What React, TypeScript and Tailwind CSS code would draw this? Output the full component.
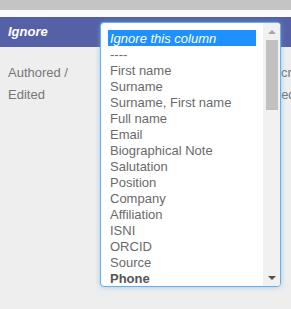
import React from "react";

const options = [
  "----",
  "First name",
  "Surname",
  "Surname, First name",
  "Full name",
  "Email",
  "Biographical Note",
  "Salutation",
  "Position",
  "Company",
  "Affiliation",
  "ISNI",
  "ORCID",
  "Source",
];

export default function App() {
  return (
    <div className="relative w-[291px] h-[309px] overflow-hidden bg-[#eeeeee] font-['Liberation_Sans',Arial,sans-serif] text-[13px]">
      <div className="h-[10px] bg-[#c4c4c4]" />
      <div className="h-[7px] bg-[#fafafa]" />
      <div className="flex h-[30px] items-center bg-[#5660a6] px-2 font-bold italic text-white">
        Ignore
      </div>
      <div className="flex pt-[15px] leading-[22px] text-[#777]">
        <div className="w-[258px] shrink-0 pl-2">
          Authored /<br />
          Edited
        </div>
        <div className="shrink-0 whitespace-nowrap">
          Description
          <br />
          Added
        </div>
      </div>

      {/* open column dropdown */}
      <div className="absolute left-[100px] top-[22px] flex h-[265px] w-[181px] overflow-hidden rounded-[4px] border border-[#66afe9] bg-white shadow-[0_0_5px_rgba(102,175,233,0.6)]">
        <div className="flex-1 pl-[7px] pt-[7px] leading-[17px] text-[#6a6a6a]">
          <div className="h-[16px] w-[148px] bg-[#1e90ff] pl-[2px] italic text-white">
            Ignore this column
          </div>
          {options.map((o) => (
            <div key={o} className="h-[16px] whitespace-nowrap pl-[2px]">
              {o}
            </div>
          ))}
          <div className="h-[16px] pl-[2px] font-bold text-[#555]">Phone</div>
        </div>
        <div className="flex w-[17px] flex-col items-center bg-[#f1f1f1]">
          <div className="flex h-[17px] items-center justify-center">
            <div className="h-0 w-0 border-x-[4px] border-b-[4px] border-x-transparent border-b-[#a3a3a3]" />
          </div>
          <div className="h-[70px] w-[12px] bg-[#c1c1c1]" />
          <div className="flex-1" />
          <div className="flex h-[17px] items-center justify-center">
            <div className="h-0 w-0 border-x-[4px] border-t-[4px] border-x-transparent border-t-[#505050]" />
          </div>
        </div>
      </div>
    </div>
  );
}
